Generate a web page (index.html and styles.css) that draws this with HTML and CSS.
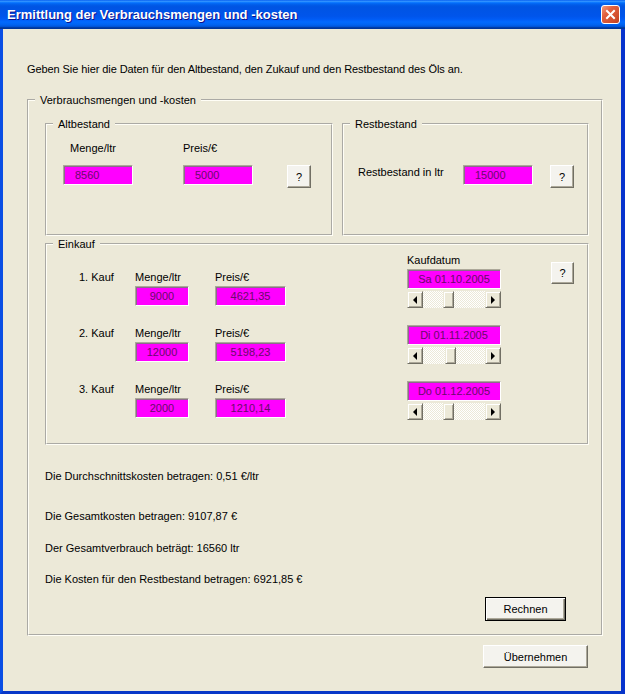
FILE: index.html
```html
<!DOCTYPE html>
<html lang="de">
<head>
    <meta charset="UTF-8">
    <title>Ermittlung der Verbrauchsmengen und -kosten</title>
    <link rel="stylesheet" href="styles.css">
</head>
<body>
    <div class="window">
        <div class="titlebar">
            <span class="title">Ermittlung der Verbrauchsmengen und -kosten</span>
            <button class="close-btn" aria-label="Schließen">
                <svg width="11" height="11" viewBox="0 0 11 11"><path d="M2 2L9 9M9 2L2 9" stroke="#fff" stroke-width="2" stroke-linecap="square"/></svg>
            </button>
        </div>
        <div class="frame-body">
            <div class="client">
                <p class="intro">Geben Sie hier die Daten für den Altbestand, den Zukauf und den Restbestand des Öls an.</p>

                <fieldset class="frame main-frame">
                    <legend>Verbrauchsmengen und -kosten</legend>
                    <div class="main-body">
                        <div class="top-row">
                            <fieldset class="frame alt-frame">
                                <legend>Altbestand</legend>
                                <div class="alt-body">
                                    <div class="field menge-field">
                                        <span class="label">Menge/ltr</span>
                                        <div class="textbox">8560</div>
                                    </div>
                                    <div class="field preis-field">
                                        <span class="label">Preis/€</span>
                                        <div class="textbox">5000</div>
                                    </div>
                                    <button class="help-btn">?</button>
                                </div>
                            </fieldset>
                            <fieldset class="frame rest-frame">
                                <legend>Restbestand</legend>
                                <div class="rest-body">
                                    <span class="label">Restbestand in ltr</span>
                                    <div class="textbox">15000</div>
                                    <button class="help-btn">?</button>
                                </div>
                            </fieldset>
                        </div>

                        <fieldset class="frame buy-frame">
                            <legend>Einkauf</legend>
                            <div class="buy-body">
                                <div class="buy-list">
                                    <div class="buy-row">
                                        <span class="label">1. Kauf</span>
                                        <div class="field">
                                            <span class="label">Menge/ltr</span>
                                            <div class="textbox menge-box">9000</div>
                                        </div>
                                        <div class="field">
                                            <span class="label">Preis/€</span>
                                            <div class="textbox preis-box">4621,35</div>
                                        </div>
                                    </div>
                                    <div class="buy-row">
                                        <span class="label">2. Kauf</span>
                                        <div class="field">
                                            <span class="label">Menge/ltr</span>
                                            <div class="textbox menge-box">12000</div>
                                        </div>
                                        <div class="field">
                                            <span class="label">Preis/€</span>
                                            <div class="textbox preis-box">5198,23</div>
                                        </div>
                                    </div>
                                    <div class="buy-row">
                                        <span class="label">3. Kauf</span>
                                        <div class="field">
                                            <span class="label">Menge/ltr</span>
                                            <div class="textbox menge-box">2000</div>
                                        </div>
                                        <div class="field">
                                            <span class="label">Preis/€</span>
                                            <div class="textbox preis-box">1210,14</div>
                                        </div>
                                    </div>
                                </div>

                                <div class="date-list">
                                    <span class="label">Kaufdatum</span>
                                    <div class="textbox date-box">Sa 01.10.2005</div>
                                    <div class="scrollbar">
                                        <span class="sb-btn sb-left"></span>
                                        <span class="sb-track"><span class="sb-thumb" style="margin-left: 20px"></span></span>
                                        <span class="sb-btn sb-right"></span>
                                    </div>
                                    <div class="textbox date-box">Di 01.11.2005</div>
                                    <div class="scrollbar">
                                        <span class="sb-btn sb-left"></span>
                                        <span class="sb-track"><span class="sb-thumb" style="margin-left: 22px"></span></span>
                                        <span class="sb-btn sb-right"></span>
                                    </div>
                                    <div class="textbox date-box">Do 01.12.2005</div>
                                    <div class="scrollbar">
                                        <span class="sb-btn sb-left"></span>
                                        <span class="sb-track"><span class="sb-thumb" style="margin-left: 20px"></span></span>
                                        <span class="sb-btn sb-right"></span>
                                    </div>
                                </div>

                                <button class="help-btn">?</button>
                            </div>
                        </fieldset>

                        <div class="results">
                            <p>Die Durchschnittskosten betragen: 0,51 €/ltr</p>
                            <p class="gap-big">Die Gesamtkosten betragen: 9107,87 €</p>
                            <p>Der Gesamtverbrauch beträgt: 16560 ltr</p>
                            <p>Die Kosten für den Restbestand betragen: 6921,85 €</p>
                        </div>

                        <div class="calc-row">
                            <button class="push-btn default-btn">Rechnen</button>
                        </div>
                    </div>
                </fieldset>

                <div class="footer-row">
                    <button class="push-btn apply-btn">Übernehmen</button>
                </div>
            </div>
        </div>
    </div>
</body>
</html>
```

FILE: styles.css
```css
* {
    box-sizing: border-box;
}

html, body {
    margin: 0;
    padding: 0;
}

body {
    width: 625px;
    height: 694px;
    overflow: hidden;
    font-family: "Liberation Sans", Arial, sans-serif;
    font-size: 11px;
    color: #000;
    background: #0831d9;
}

.window {
    display: flex;
    flex-direction: column;
    height: 694px;
}

/* title bar */
.titlebar {
    flex: none;
    height: 29px;
    display: flex;
    align-items: center;
    justify-content: space-between;
    padding: 0 5px 0 7px;
    background: linear-gradient(to bottom, #0058ee 0%, #3593ff 4%, #288eff 6%, #127dff 8%, #036ffc 10%, #0262ee 14%, #0057e5 20%, #0054e3 24%, #0055eb 56%, #005bf5 66%, #026afe 76%, #0062ef 86%, #0052d6 92%, #0040ab 94%, #003092 100%);
}

.title {
    color: #fff;
    font-weight: bold;
    font-size: 13px;
    text-shadow: 1px 1px #0f1089;
}

.close-btn {
    width: 19px;
    height: 19px;
    padding: 0;
    border: 1px solid #fff;
    border-radius: 3px;
    background: linear-gradient(135deg, #f29a7c 0%, #e2603e 35%, #d3502f 70%, #c0401f 100%);
    display: flex;
    align-items: center;
    justify-content: center;
}

.frame-body {
    flex: 1;
    display: flex;
    border-left: 3px solid #0a4ee4;
    border-right: 4px solid #0733cd;
    border-bottom: 3px solid #0838c8;
}

.client {
    flex: 1;
    background: #ece9d8;
    padding-top: 33px;
}

.intro {
    margin: 0 0 17px 24px;
    line-height: 14px;
    letter-spacing: -0.08px;
}

/* group frames */
.frame {
    margin: 0;
    padding: 0;
    min-width: 0;
    border: 2px groove #fffef6;
}

.frame > legend {
    margin-left: 6px;
    padding: 0 5px;
    line-height: 14px;
}

.label {
    line-height: 14px;
    white-space: nowrap;
}

.main-frame {
    margin-left: 24px;
    width: 576px;
}

.main-body {
    padding: 10px 12px 13px 16px;
}

.top-row {
    display: flex;
    gap: 9px;
}

.alt-frame {
    width: 288px;
    height: 119px;
}

.rest-frame {
    width: 247px;
    height: 119px;
}

.field {
    display: flex;
    flex-direction: column;
}

.alt-body {
    display: flex;
    align-items: flex-start;
    padding: 10px 0 0 16px;
}

.alt-body .label {
    margin-bottom: 10px;
}

.menge-field .label {
    padding-left: 7px;
}

.preis-field {
    margin-left: 50px;
}

.alt-body .textbox,
.rest-body .textbox {
    width: 70px;
    padding-left: 11px;
}

.alt-body .help-btn {
    margin: 24px 0 0 34px;
}

.rest-body {
    display: flex;
    align-items: flex-start;
    padding: 34px 0 0 14px;
}

.rest-body .label {
    width: 105px;
}

.rest-body .help-btn {
    margin-left: 17px;
}

/* magenta text boxes */
.textbox {
    height: 20px;
    line-height: 18px;
    background: #ff00ff;
    color: #6a0a6a;
    border: 1px solid;
    border-color: #aca899 #fff #fff #aca899;
    box-shadow: inset 1px 1px #8c6a8c;
    white-space: nowrap;
}

.menge-box,
.preis-box,
.date-box {
    text-align: center;
}

.menge-box {
    width: 54px;
}

.preis-box {
    width: 71px;
}

/* Einkauf */
.buy-frame {
    margin-top: 1px;
    height: 208px;
}

.buy-body {
    display: flex;
    align-items: flex-start;
    padding-left: 32px;
}

.buy-list {
    margin-top: 19px;
    display: flex;
    flex-direction: column;
    gap: 20px;
}

.buy-row {
    display: grid;
    grid-template-columns: 56px 80px 71px;
    align-items: start;
}

.buy-row .field .label {
    margin-bottom: 2px;
}

.date-list {
    margin: 2px 0 0 121px;
    width: 94px;
    display: flex;
    flex-direction: column;
}

.date-box {
    margin-top: 2px;
}

.date-list .scrollbar + .date-box {
    margin-top: 17px;
}

.buy-body .help-btn {
    margin: 11px 0 0 50px;
    width: 23px;
    height: 22px;
}

/* classic scroll bar */
.scrollbar {
    margin-top: 2px;
    height: 17px;
    display: flex;
}

.sb-btn {
    width: 16px;
    height: 17px;
    flex: none;
    background: #ece9d8;
    border: 1px solid;
    border-color: #ece9d8 #716f64 #716f64 #ece9d8;
    box-shadow: inset 1px 1px #fff, inset -1px -1px #aca899;
    display: flex;
    align-items: center;
    justify-content: center;
}

.sb-left::before,
.sb-right::before {
    content: "";
    border-top: 4px solid transparent;
    border-bottom: 4px solid transparent;
}

.sb-left::before {
    border-right: 4px solid #000;
}

.sb-right::before {
    border-left: 4px solid #000;
}

.sb-track {
    flex: 1;
    display: flex;
    background: repeating-conic-gradient(#fff 0 25%, #ece9d8 0 50%) 0 0 / 2px 2px;
}

.sb-thumb {
    width: 11px;
    height: 17px;
    background: #ece9d8;
    border: 1px solid;
    border-color: #ece9d8 #716f64 #716f64 #ece9d8;
    box-shadow: inset 1px 1px #fff, inset -1px -1px #aca899;
}

/* buttons */
.help-btn,
.push-btn {
    font: inherit;
    color: #000;
    padding: 0;
    background: #f4f3ee;
    border: 1px solid;
    border-color: #fff #716f64 #716f64 #fff;
    box-shadow: inset -1px -1px #aca899;
}

.help-btn {
    width: 24px;
    height: 23px;
    flex: none;
}

.results {
    margin-top: 24px;
}

.results p {
    margin: 0 0 17px;
    line-height: 14px;
}

.results p:first-child {
    margin-bottom: 26px;
}

.results p.gap-big {
    margin-bottom: 18px;
}

.results p:last-child {
    margin-bottom: 0;
}

.calc-row {
    margin-top: 11px;
    display: flex;
    justify-content: flex-end;
    padding-right: 23px;
}

.default-btn {
    width: 81px;
    height: 24px;
    border: 1px solid #000;
    box-shadow: inset 1px 1px #fff, inset -1px -1px #716f64, inset -2px -2px #aca899;
}

.footer-row {
    margin-top: 9px;
    display: flex;
    justify-content: flex-end;
    padding-right: 33px;
}

.apply-btn {
    width: 105px;
    height: 23px;
}
```
